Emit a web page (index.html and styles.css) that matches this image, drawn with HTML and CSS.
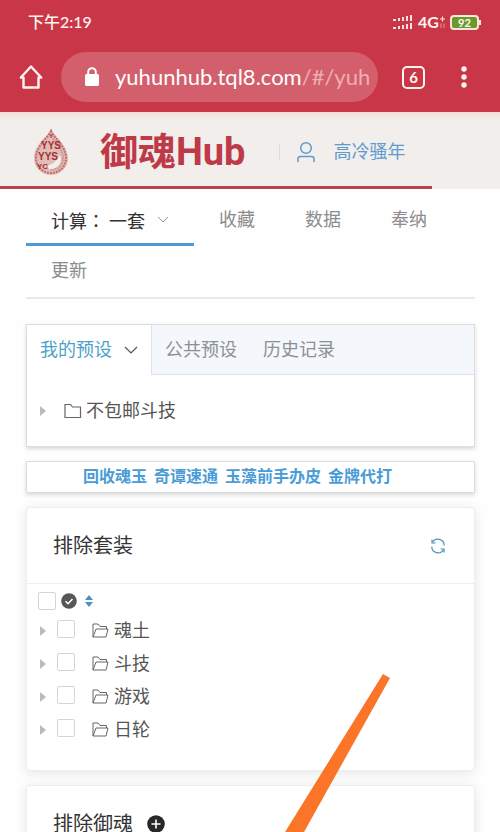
FILE: index.html
```html
<!DOCTYPE html>
<html lang="zh-CN">
<head>
  <meta charset="UTF-8">
  <meta name="viewport" content="width=device-width, initial-scale=1.0">
  <title>御魂Hub</title>
  <link rel="stylesheet" href="styles.css">
</head>
<body>
  <div class="browser">
    <div class="status-bar">
      <span class="time">下午2:19</span>
      <div class="status-icons">
        <svg width="20" height="16" viewBox="0 0 20 16" fill="#fbe3de">
          <path d="M0 5h3v2H0zM5 4h2v3H5zM9 3h2v4H9zM13 2h2v5h-2zM17 1h2v6h-2zM0 13h3v2H0zM5 12h2v3H5zM9 11h2v4H9zM13 10h2v5h-2zM17 9h2v6h-2z"/>
        </svg>
        <span class="network">4G</span>
        <svg width="7" height="14" viewBox="0 0 7 14" fill="none">
          <path d="M1 4h5M3.500 1.500v5" stroke="#fbe3de" stroke-width="1.200"/>
          <path d="M2 8.500v4.500M5 8.500v4.500" stroke="#f0929a" stroke-width="1"/>
        </svg>
        <span class="battery">92</span>
      </div>
    </div>
    <div class="address-bar">
      <button class="icon-btn" aria-label="主页">
        <svg width="24" height="26" viewBox="0 0 24 26" fill="none" stroke="#fff3ee" stroke-width="2.400" stroke-linejoin="round" stroke-linecap="round">
          <path d="M4.500 13.500H1.800L12 2.500l10.200 11H19.500v10h-15z"/>
        </svg>
      </button>
      <div class="url">
        <svg width="16" height="20" viewBox="0 0 16 20">
          <rect x="1" y="7" width="14" height="12" rx="1.500" fill="#fff"/>
          <path d="M4.200 8V5a3.800 3.800 0 0 1 7.600 0v3" fill="none" stroke="#fff" stroke-width="2"/>
        </svg>
        <span class="url-text">yuhunhub.tql8.com<span class="url-path">/#/yuh</span></span>
      </div>
      <button class="icon-btn tabs-count">6</button>
      <button class="icon-btn" aria-label="菜单">
        <svg width="8" height="24" viewBox="0 0 8 24" fill="#fff3ee">
          <circle cx="4" cy="4" r="2.700"/><circle cx="4" cy="12" r="2.700"/><circle cx="4" cy="20" r="2.700"/>
        </svg>
      </button>
    </div>
  </div>

  <header class="site-header">
    <div class="brand">
      <svg width="38" height="48" viewBox="0 0 38 48">
        <path d="M19 1c3 7 17 16 17 29 0 10-8 17-17 17S2 40 2 30C2 17 16 8 19 1z" fill="#e2bab6"/>
        <path d="M19 3c3 7 15 15 15 27 0 9-7 15-15 15S4 39 4 30C4 18 16 10 19 3z" fill="none" stroke="#c0706f" stroke-width="2" stroke-dasharray="2 1"/>
        <path d="M19 7c3 6 12 13 12 23 0 7-5 12-12 12" fill="none" stroke="#cd8a87" stroke-width="2" stroke-dasharray="1 1"/>
        <path d="M28 27c3 7-1 13-9 14-3 0-4-2-2-4 5-1 8-5 11-10z" fill="#f1eeeb"/>
        <g fill="#9f3035" class="logo-text">
          <text x="17" y="10" font-size="6">Y</text>
          <text x="9" y="21" font-size="10">YYS</text>
          <text x="6" y="32" font-size="10">YYS</text>
          <text x="5" y="41" font-size="8">YC</text>
        </g>
      </svg>
      <h1>御魂Hub</h1>
      <a class="user" href="#">
        <svg width="20" height="22" viewBox="0 0 20 22" fill="none" stroke="#5f9bd0" stroke-width="1.500" stroke-linecap="round">
          <circle cx="10" cy="7" r="5.300"/>
          <path d="M2 20.500v-2.500q0-2.500 2.500-2.500h11q2.500 0 2.500 2.500v2.500"/>
        </svg>
        高冷骚年
      </a>
    </div>
  </header>

  <main>
    <nav class="menu">
      <a class="active" href="#"><span>计算<span class="colon" lang="zh-TW">：</span>一套</span>
        <svg width="12" height="8" viewBox="0 0 12 8" fill="none" stroke="#999"><path d="M1 1l5 5 5-5"/></svg>
      </a>
      <a href="#">收藏</a>
      <a href="#">数据</a>
      <a href="#">奉纳</a>
      <a href="#">更新</a>
    </nav>

    <section class="panel presets">
      <div class="tabs">
        <button class="tab active">我的预设
          <svg width="14" height="9" viewBox="0 0 14 9" fill="none" stroke="#555" stroke-width="1.200"><path d="M1 1l6 6 6-6"/></svg>
        </button>
        <button class="tab">公共预设</button>
        <button class="tab">历史记录</button>
      </div>
      <div class="preset-row">
        <span class="caret"></span>
        <svg width="18" height="16" viewBox="0 0 18 16" fill="none" stroke="#666" stroke-width="1.200"><path d="M1 14.500v-13h5.500l2 2.500H16.500v10.500z"/></svg>
        <span>不包邮斗技</span>
      </div>
    </section>

    <div class="panel notice">
      <a href="#">回收魂玉</a>
      <a href="#">奇谭速通</a>
      <a href="#">玉藻前手办皮</a>
      <a href="#">金牌代打</a>
    </div>

    <section class="card">
      <div class="card-header">
        <h2>排除套装</h2>
        <button class="icon-btn" aria-label="刷新">
          <svg width="16" height="16" viewBox="0 0 16 16" fill="none" stroke="#4a92c0" stroke-width="1.200">
            <path d="M2.500 4.500A6.200 6.200 0 0 1 14.200 7.500M13.500 11.500A6.200 6.200 0 0 1 1.800 8.500"/>
            <path d="M2 1.500v3.500h3.500M14 14.500V11h-3.500"/>
          </svg>
        </button>
      </div>
      <div class="tree">
        <div class="tree-tools">
          <input type="checkbox" aria-label="全选">
          <svg width="16" height="16" viewBox="0 0 16 16"><circle cx="8" cy="8" r="7.800" fill="#555759"/><path d="M4.500 8.200l2.500 2.500 4.500-4.700" fill="none" stroke="#fff" stroke-width="1.600"/></svg>
          <svg width="10" height="12" viewBox="0 0 10 12" fill="#4a92c0"><path d="M1 5l4-5 4 5zM1 7h8l-4 5z"/></svg>
        </div>
        <div class="tree-row">
          <span class="caret"></span>
          <input type="checkbox" id="hun">
          <svg class="folder" width="17" height="15" viewBox="0 0 17 15"><path d="M1 14V1h5l2 2.500h6.500V6M1 14L4 6h12l-2 8z"/></svg>
          <label for="hun">魂土</label>
        </div>
        <div class="tree-row">
          <span class="caret"></span>
          <input type="checkbox" id="douji">
          <svg class="folder" width="17" height="15" viewBox="0 0 17 15"><path d="M1 14V1h5l2 2.500h6.500V6M1 14L4 6h12l-2 8z"/></svg>
          <label for="douji">斗技</label>
        </div>
        <div class="tree-row">
          <span class="caret"></span>
          <input type="checkbox" id="youxi">
          <svg class="folder" width="17" height="15" viewBox="0 0 17 15"><path d="M1 14V1h5l2 2.500h6.500V6M1 14L4 6h12l-2 8z"/></svg>
          <label for="youxi">游戏</label>
        </div>
        <div class="tree-row">
          <span class="caret"></span>
          <input type="checkbox" id="rilun">
          <svg class="folder" width="17" height="15" viewBox="0 0 17 15"><path d="M1 14V1h5l2 2.500h6.500V6M1 14L4 6h12l-2 8z"/></svg>
          <label for="rilun">日轮</label>
        </div>
      </div>
    </section>

    <section class="card">
      <div class="card-header">
        <h2>排除御魂</h2>
        <button class="icon-btn add" aria-label="添加">
          <svg width="18" height="18" viewBox="0 0 18 18"><circle cx="9" cy="9" r="8.800" fill="#26282a"/><path d="M4.500 9h9M9 4.500v9" stroke="#fff" stroke-width="1.600"/></svg>
        </button>
      </div>
    </section>
  </main>

  <svg class="pointer" width="105" height="158" viewBox="0 0 105 158"><path d="M98 0l7 4L19 158H0z" fill="#fb7528"/></svg>
</body>
</html>
```

FILE: styles.css
```css
* {
  box-sizing: border-box;
}

html {
  height: 100%;
  overflow: hidden;
}

body {
  position: relative;
  height: 100%;
  margin: 0;
  overflow: hidden;
  font-family: Roboto, "Noto Sans CJK SC", sans-serif;
  font-size: 18px;
  line-height: 26px;
  color: #555;
  background: #fefefe;
}

a {
  color: inherit;
  text-decoration: none;
}

h1, h2 {
  margin: 0;
}

svg {
  display: block;
  flex: none;
}

button {
  font: inherit;
  color: inherit;
  background: none;
  border: none;
  padding: 0;
  cursor: pointer;
}

/* Browser bar */
.browser {
  height: 112px;
  background: #c93648;
  color: #fff3ee;
  font-family: Lato, "Noto Sans CJK SC", sans-serif;
}

.status-bar {
  display: flex;
  justify-content: space-between;
  align-items: center;
  height: 44px;
  padding: 0 21px 0 28px;
}

.time {
  font-size: 16px;
  font-weight: 500;
}

.status-icons {
  display: flex;
  align-items: center;
}

.network {
  margin-left: 5px;
  font-size: 16px;
  font-weight: bold;
}

.battery {
  position: relative;
  margin-left: 4px;
  width: 29px;
  height: 15px;
  border: 2px solid #fbe3de;
  border-radius: 4px;
  background: #6b9a2c;
  color: #fff;
  font-size: 11px;
  font-weight: bold;
  line-height: 11px;
  text-align: center;
}

.battery::after {
  content: "";
  position: absolute;
  top: 3px;
  right: -4px;
  width: 2px;
  height: 5px;
  background: #fbe3de;
}

.address-bar {
  display: flex;
  align-items: center;
  height: 66px;
  padding: 0 32px 0 19px;
}

.url {
  display: flex;
  flex: 1;
  align-items: center;
  gap: 15px;
  height: 50px;
  margin: 0 24px 0 18px;
  padding-left: 23px;
  border-radius: 25px;
  background: #d35f6c;
}

.url-text {
  font-size: 22px;
  color: #fff;
  white-space: nowrap;
}

.url-path {
  color: #f0aeb0;
}

.tabs-count {
  width: 23px;
  height: 23px;
  margin-right: 35px;
  border: 2px solid #fff3ee;
  border-radius: 5px;
  font-size: 15px;
  font-weight: bold;
  line-height: 19px;
}

/* Site header */
.site-header {
  background: linear-gradient(#f6dcd8, #f1eeeb 8px);
}

.brand {
  display: flex;
  align-items: center;
  width: 432px;
  max-width: 100%;
  height: 77px;
  padding: 6px 0 0 32px;
  border-bottom: 3px solid #b9434c;
}

.logo-text {
  font-family: "Liberation Sans", sans-serif;
  font-weight: bold;
}

.brand h1 {
  margin-left: 30px;
  font-size: 38px;
  line-height: 44px;
  color: #be3a48;
}

.user {
  display: flex;
  align-items: center;
  gap: 18px;
  height: 16px;
  margin-left: 33px;
  padding-left: 16px;
  border-left: 1px solid #ddd;
  color: #5f9bd0;
}

/* Menu */
main {
  padding: 0 25px 0 26px;
}

.menu {
  display: flex;
  flex-wrap: wrap;
  margin-bottom: 25px;
  padding-top: 6px;
  border-bottom: 2px solid #e9e9e9;
}

.menu a {
  height: 51px;
  padding: 12px 25px 0;
  color: #8c8c8c;
}

.menu .active {
  display: flex;
  gap: 12px;
  border-bottom: 3px solid #4e9ad6;
  color: #333;
}

.menu svg {
  margin-top: 9px;
}

.colon {
  margin-right: 4px;
  font-family: "Noto Sans CJK TC", sans-serif;
}

/* Presets */
.panel {
  border: 1px solid #ddd;
  background: #fff;
  box-shadow: 0 2px 4px rgba(0, 0, 0, 0.15);
}

.tabs {
  display: flex;
  background: #f4f7fb;
  border-bottom: 1px solid #dfe3e9;
}

.tab {
  height: 49px;
  padding: 0 13px;
  color: #8c9094;
}

.tab.active {
  display: flex;
  align-items: center;
  gap: 12px;
  height: 50px;
  margin-bottom: -1px;
  border-right: 1px solid #dfe3e9;
  background: #fff;
  color: #4e9fcb;
}

.preset-row {
  display: flex;
  align-items: center;
  height: 71px;
  padding-left: 13px;
}

.preset-row svg {
  margin: 0 4px 0 18px;
}

.caret {
  border: 5px solid transparent;
  border-left: 6px solid #bbb;
  border-right: none;
}

.notice {
  display: flex;
  gap: 7px;
  margin: 14px 0;
  padding: 2px 56px;
  color: #4a9bd6;
  font-size: 16px;
  font-weight: bold;
  white-space: nowrap;
}

/* Cards */
.card {
  margin-bottom: 14px;
  border: 1px solid #eee;
  border-radius: 4px;
  background: #fff;
  box-shadow: 0 2px 12px rgba(0, 0, 0, 0.1);
}

.card-header {
  display: flex;
  align-items: center;
  justify-content: space-between;
  height: 76px;
  padding: 0 28px 0 26px;
  border-bottom: 1px solid #eee;
}

.card-header h2 {
  font-size: 20px;
  font-weight: normal;
  color: #333;
}

.card-header .add {
  margin: 0 auto 0 14px;
}

input[type="checkbox"] {
  appearance: none;
  width: 18px;
  height: 18px;
  margin: 0;
  border: 1px solid #d5d5d5;
  border-radius: 2px;
  background: #fff;
}

.tree {
  padding: 4px 0 24px 11px;
}

.tree-tools {
  display: flex;
  align-items: center;
  gap: 5px;
  height: 26px;
}

.tree-tools svg:last-child {
  margin-left: 2px;
}

.tree-row {
  display: flex;
  align-items: center;
  height: 33px;
  padding-left: 2px;
}

.tree-row input {
  margin: 0 17px 4px 11px;
}

.tree-row label {
  margin-left: 5px;
}

.folder {
  fill: none;
  stroke: #666;
  stroke-width: 1;
}

.pointer {
  position: absolute;
  left: 285px;
  bottom: 0;
}
```
